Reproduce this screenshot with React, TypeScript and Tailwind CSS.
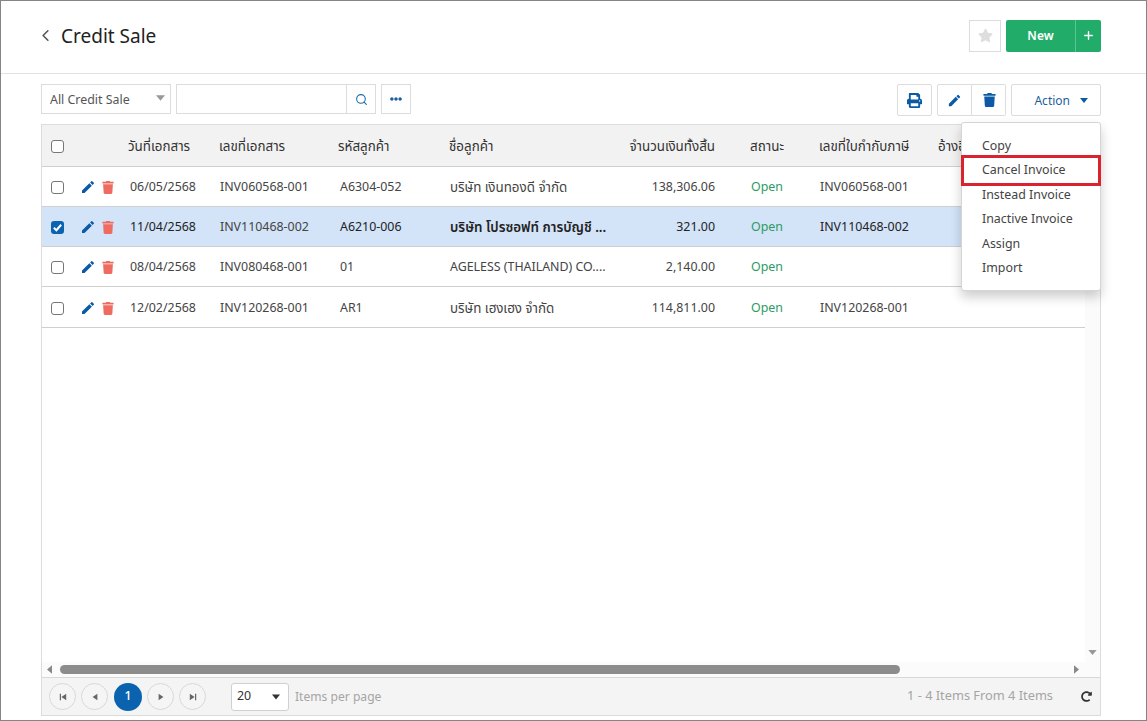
import React from "react";
import { FaPrint, FaTrash, FaStar, FaEllipsisH, FaRedoAlt } from "react-icons/fa";
import { ChevronLeft, Search, Plus } from "lucide-react";

const Pencil = ({ className }: { className?: string }) => (
  <svg viewBox="0 0 24 24" className={className} fill="currentColor">
    <path d="M3 17.25V21h3.75L17.81 9.94l-3.75-3.75L3 17.25zM20.71 7.04a1 1 0 0 0 0-1.41l-2.34-2.34a1 1 0 0 0-1.41 0l-1.83 1.83 3.75 3.75 1.83-1.83z" />
  </svg>
);

const Check = ({ checked }: { checked?: boolean }) =>
  checked ? (
    <span className="flex h-[13px] w-[13px] items-center justify-center rounded-[3px] bg-[#0b63b0]">
      <svg viewBox="0 0 12 12" className="h-[11px] w-[11px]" fill="none" stroke="white" strokeWidth="2.2">
        <path d="M2 6.2 L4.8 9 L10 3" />
      </svg>
    </span>
  ) : (
    <span className="block h-[13px] w-[13px] rounded-[3px] border border-[#777] bg-white" />
  );

const rows = [
  { d: "06/05/2568", n: "INV060568-001", c: "A6304-052", name: "บริษัท เงินทองดี จำกัด", thai: true, a: "138,306.06", t: "INV060568-001", h: "h-[40px] pt-[1px]" },
  { d: "11/04/2568", n: "INV110468-002", c: "A6210-006", name: "บริษัท โปรซอฟท์ การบัญชี ...", thai: true, a: "321.00", t: "INV110468-002", sel: true, h: "h-[40px] pt-[1px]" },
  { d: "08/04/2568", n: "INV080468-001", c: "01", name: "AGELESS (THAILAND) CO....", thai: false, a: "2,140.00", t: "", h: "h-[40px] pt-[1px]" },
  { d: "12/02/2568", n: "INV120268-001", c: "AR1", name: "บริษัท เฮงเฮง จำกัด", thai: true, a: "114,811.00", t: "INV120268-001", h: "h-[41px] pt-[2px]" },
];

const menu = ["Copy", "Cancel Invoice", "Instead Invoice", "Inactive Invoice", "Assign", "Import"];

const PageBtn = ({ children }: { children: React.ReactNode }) => (
  <span className="flex h-[27px] w-[27px] items-center justify-center rounded-full border border-[#d8d8d8] bg-[#f5f5f5] text-[#666]">
    {children}
  </span>
);

export default function App() {
  return (
    <div className="relative flex h-[721px] w-[1147px] flex-col overflow-hidden border border-[#858585] bg-white text-[12.4px] text-[#444] [font-family:'Noto_Sans','Noto_Sans_Thai',sans-serif]">
      <header className="flex h-[73px] shrink-0 items-center border-b border-[#e3e3e3] pb-[3px] pl-[35px] pr-[45px]">
        <ChevronLeft className="h-[19px] w-[19px] text-[#555]" strokeWidth={2} />
        <h1 className="ml-[6px] mt-[1px] text-[19px] text-[#222]">Credit Sale</h1>
        <div className="ml-auto flex items-center gap-[5px]">
          <span className="flex h-[32px] w-[32px] items-center justify-center border border-[#dcdcdc]">
            <FaStar className="h-[15px] w-[15px] text-[#dedede]" />
          </span>
          <div className="flex h-[32px] w-[95px] items-center rounded-[2px] bg-[#21ac69] text-white">
            <span className="flex-1 text-center text-[12px] font-semibold">New</span>
            <span className="flex h-full w-[26px] items-center justify-center border-l border-[#5cc596]">
              <Plus className="h-[13px] w-[13px]" strokeWidth={2.5} />
            </span>
          </div>
        </div>
      </header>

      <div className="mt-[10px] flex h-[30px] shrink-0 items-start pl-[40px] pr-[45px]">
        <div className="flex h-[30px] w-[130px] items-center justify-between border border-[#dcdcdc] pl-[8px] pr-[5px] pt-[2px] text-[#555]">
          <span>All Credit Sale</span>
          <svg viewBox="0 0 10 6" className="mb-[4px] h-[6px] w-[9px]" fill="#999"><path d="M0 0h10L5 6z" /></svg>
        </div>
        <div className="ml-[5px] flex h-[30px] w-[200px] border border-[#dcdcdc]">
          <span className="flex-1" />
          <span className="flex w-[29px] items-center justify-center border-l border-[#dcdcdc]">
            <Search className="h-[13px] w-[13px] text-[#1b6ea8]" strokeWidth={2} />
          </span>
        </div>
        <span className="ml-[5px] flex h-[30px] w-[30px] items-center justify-center border border-[#dcdcdc]">
          <FaEllipsisH className="h-[12px] w-[12px] text-[#1b5f9c]" />
        </span>
        <div className="ml-auto flex items-start">
          <span className="flex h-[32px] w-[35px] items-center justify-center rounded-[2px] border border-[#dcdcdc]">
            <FaPrint className="h-[15px] w-[15px] text-[#0b5aa5]" />
          </span>
          <span className="ml-[5px] flex h-[32px] w-[35px] items-center justify-center rounded-l-[2px] border border-[#dcdcdc]">
            <Pencil className="h-[15px] w-[15px] text-[#0b5aa5]" />
          </span>
          <span className="flex h-[32px] w-[34px] items-center justify-center rounded-r-[2px] border border-l-0 border-[#dcdcdc] pl-[1px]">
            <FaTrash className="h-[14px] w-[13px] text-[#0b5aa5]" />
          </span>
          <span className="ml-[5px] flex h-[32px] w-[90px] items-center justify-end gap-[10px] rounded-[2px] border border-[#dcdcdc] pr-[12px] pt-[2px] text-[12px] text-[#1b5f9c]">
            Action
            <svg viewBox="0 0 10 6" className="mb-[2px] h-[5px] w-[8px]" fill="#0b5aa5"><path d="M0 0h10L5 6z" /></svg>
          </span>
        </div>
      </div>

      <main className="ml-[40px] mt-[10px] flex h-[592px] w-[1060px] shrink-0 flex-col border border-[#dcdcdc]">
        <div className="flex min-h-0 flex-1">
          <div className="min-w-0 flex-1 overflow-hidden">
            <div className="flex h-[42px] items-center border-b border-[#cfcfcf] bg-[#f2f2f2] pt-[1px] text-[13.4px] text-[#333]">
              <span className="w-[30px] pl-[9px]"><Check /></span>
              <span className="w-[55px]" />
              <span className="w-[91px] whitespace-nowrap pl-[1px]">วันที่เอกสาร</span>
              <span className="w-[119px] whitespace-nowrap pl-[1px]">เลขที่เอกสาร</span>
              <span className="w-[111px] whitespace-nowrap pl-[1px]">รหัสลูกค้า</span>
              <span className="w-[165px] whitespace-nowrap pl-[1px]">ชื่อลูกค้า</span>
              <span className="w-[106px] whitespace-nowrap pr-[4px] text-right">จำนวนเงินทั้งสิ้น</span>
              <span className="w-[99px] pr-[3px] text-center">สถานะ</span>
              <span className="w-[120px] whitespace-nowrap pl-[1px]">เลขที่ใบกำกับภาษี</span>
              <span className="whitespace-nowrap">อ้างอิง</span>
            </div>
            {rows.map((r) => (
              <div key={r.n} className={`flex items-center border-b border-[#cfcfcf] ${r.h} ${r.sel ? "bg-[#d3e3f8] text-[#222]" : "bg-white"}`}>
                <span className="w-[30px] pl-[9px]"><Check checked={r.sel} /></span>
                <span className="flex w-[55px] items-center gap-[6px] pl-[8px]">
                  <Pencil className="h-[16px] w-[16px] text-[#0b5aa5]" />
                  <FaTrash className="h-[13px] w-[12px] text-[#ef6a5f]" />
                </span>
                <span className="w-[91px] pl-[3px]">{r.d}</span>
                <span className="w-[119px] pl-[2px] text-[#444]">{r.n}</span>
                <span className="w-[111px] pl-[3px]">{r.c}</span>
                <span className={`w-[165px] whitespace-nowrap pl-[2px] ${r.thai ? "text-[13.4px]" : ""} ${r.sel ? "font-semibold" : ""}`}>{r.name}</span>
                <span className="w-[106px] pr-[4px] text-right">{r.a}</span>
                <span className="w-[99px] pr-[3px] text-center text-[#2e9b62]">Open</span>
                <span className="w-[120px] pl-[2px]">{r.t}</span>
              </div>
            ))}
          </div>
          <div className="flex w-[15px] shrink-0 items-end justify-center bg-[#fbfbfb] pb-[7px]">
            <svg viewBox="0 0 10 6" className="h-[5px] w-[9px]" fill="#999"><path d="M0 0h10L5 6z" /></svg>
          </div>
        </div>
        <div className="flex h-[15px] shrink-0 items-center bg-[#fbfbfb] pl-[5px] pr-[21px]">
          <svg viewBox="0 0 6 10" className="h-[9px] w-[5px]" fill="#888"><path d="M6 0v10L0 5z" /></svg>
          <span className="ml-[8px] h-[9px] w-[840px] rounded-full bg-[#8c8c8c]" />
          <svg viewBox="0 0 6 10" className="ml-auto h-[9px] w-[5px]" fill="#888"><path d="M0 0v10l6-5z" /></svg>
        </div>
        <footer className="flex h-[38px] shrink-0 items-center border-t border-[#d8d8d8] bg-[#f4f4f4] pl-[7px] pr-[8px]">
          <div className="flex items-center gap-[5px]">
            <PageBtn><svg viewBox="0 0 10 10" className="h-[8px] w-[8px]" fill="currentColor"><path d="M1 1h1.5v8H1zM9 1v8L3 5z" /></svg></PageBtn>
            <PageBtn><svg viewBox="0 0 10 10" className="h-[8px] w-[8px]" fill="currentColor"><path d="M8 1v8L2 5z" /></svg></PageBtn>
            <span className="ml-[1px] flex h-[28px] w-[28px] items-center justify-center rounded-full bg-[#0b63b0] font-medium text-white">1</span>
            <PageBtn><svg viewBox="0 0 10 10" className="h-[8px] w-[8px]" fill="currentColor"><path d="M2 1v8l6-4z" /></svg></PageBtn>
            <PageBtn><svg viewBox="0 0 10 10" className="h-[8px] w-[8px]" fill="currentColor"><path d="M1 1v8l6-4zM7.5 1H9v8H7.5z" /></svg></PageBtn>
          </div>
          <div className="ml-[25px] flex h-[28px] w-[58px] items-center justify-between rounded-[3px] border border-[#d0d0d0] bg-white pl-[5px] pr-[8px] text-[#333]">
            <span>20</span>
            <svg viewBox="0 0 10 6" className="h-[6px] w-[8px]" fill="#333"><path d="M0 0h10L5 6z" /></svg>
          </div>
          <span className="ml-[6px] pt-[1px] text-[12.1px] text-[#a5a5a5]">Items per page</span>
          <span className="ml-auto pb-[1px] text-[12.8px] text-[#a5a5a5]">1 - 4 Items From 4 Items</span>
          <FaRedoAlt className="ml-[28px] h-[11px] w-[11px] text-[#333]" />
        </footer>
      </main>

      <div className="absolute left-[960px] top-[121px] w-[140px] rounded-[3px] border border-[#d5d5d5] bg-white pb-[9px] pt-[11px] shadow-[0_6px_12px_rgba(0,0,0,0.2)]">
        {menu.map((m) => (
          <div key={m} className="relative flex h-[24.5px] items-center pl-[20px] text-[#444]">
            {m}
            {m === "Cancel Invoice" && <span className="absolute -left-[1px] -right-[1px] top-[-4px] bottom-[-3px] border-[3px] border-[#d9232e]" />}
          </div>
        ))}
      </div>
    </div>
  );
}
